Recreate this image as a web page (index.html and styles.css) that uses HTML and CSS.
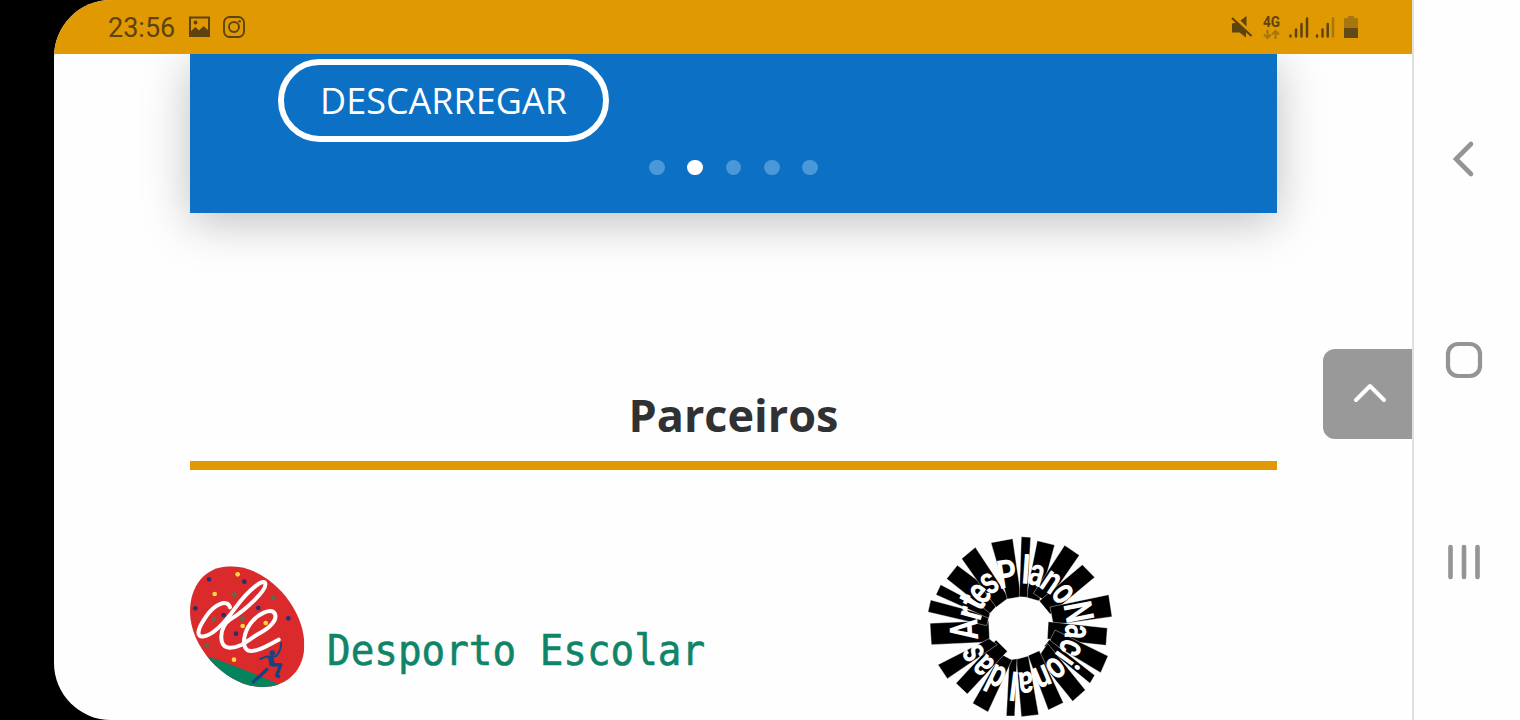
FILE: index.html
```html
<!DOCTYPE html>
<html lang="pt">
<head>
<meta charset="utf-8">
<title>Parceiros</title>
<link rel="stylesheet" href="styles.css">
</head>
<body>
<div class="device">
  <main class="screen">
    <header class="status">
      <div class="status-left">
        <span class="clock">23:56</span>
        <svg class="st-icon" width="22" height="22" viewBox="0 0 22 22"><path fill="#5d4310" fill-rule="evenodd" d="M0 .5H21V21H0ZM2 2.500V15L6.500 11L10 14.500L14.500 10L19 14V2.500ZM6.500 4.500a2 2 0 1 1 0 4a2 2 0 1 1 0-4"/></svg>
        <svg class="st-icon insta" width="22" height="22" viewBox="0 0 22 22" fill="none" stroke="#5d4310" stroke-width="1.9"><rect x="1" y="1" width="20" height="20" rx="5.5"/><circle cx="11" cy="11" r="5"/><circle cx="16.6" cy="5.3" r="1.3" fill="#5d4310" stroke="none"/></svg>
      </div>
      <svg class="status-right" width="132" height="30" viewBox="0 0 132 30" fill="#5d4310">
        <path d="M4 10.500L9 9.500L18 18V24.500L11.500 19.500H4V11ZM12.500 7.500L18.500 3V13.500Z"/>
        <path d="M4 5L23.500 23" fill="none" stroke="#5d4310" stroke-width="2.200"/>
        <text x="35" y="13.500" class="net" textLength="17" lengthAdjust="spacingAndGlyphs">4G</text>
        <g fill="none" stroke="#a8760f" stroke-width="2.200"><path d="M39.500 17V25M36 21.500L39.500 25L43 21.500M47.500 26V18M44 21.500L47.500 18L51 21.500"/></g>
        <g fill="none" stroke="#5d4310" stroke-width="2.500" stroke-linecap="round"><path d="M62.500 22.500V23.500M68 16.500V23.500M73.500 11V23.500M79 5.500V23.500M89 22.500V23.500M94.500 16.500V23.500M99.700 11V23.500"/><path stroke="#a8760f" d="M105 5.500V23.500"/></g>
        <path fill="#a8760f" d="M120 5V4Q120 3 121 3H125Q126 3 126 4V5H130V15H116V5Z"/>
        <path fill="#624918" d="M116 15H130V25H116Z"/>
      </svg>
    </header>
    <div class="content">
      <section class="banner">
        <a class="download"><svg width="264" height="56" viewBox="0 0 264 56"><text x="8" y="41" textLength="247" lengthAdjust="spacingAndGlyphs">DESCARREGAR</text></svg></a>
        <div class="dots"><i></i><i class="on"></i><i></i><i></i><i></i></div>
      </section>
      <h2 class="title">Parceiros</h2>
      <div class="partners">
        <div class="desporto">
          <svg width="115" height="123" viewBox="30 45 345 369">
            <defs><clipPath id="egg"><path id="shell" d="M30 185C30 110 73 49 153 49C264 49 373 172 373 285C373 356 326 411 247 411C141 411 30 294 30 185Z"/></clipPath></defs>
            <g clip-path="url(#egg)">
              <path fill="#da2a2b" d="M20 40H380V420H20Z"/>
              <path fill="#04835f" d="M60 312Q180 350 310 409L200 440L40 390Z"/>
              <g fill="#273070"><circle cx="87" cy="88" r="7"/><circle cx="193" cy="95" r="7"/><circle cx="46" cy="175" r="7"/><circle cx="131" cy="195" r="7"/><circle cx="235" cy="174" r="7"/><circle cx="325" cy="205" r="7"/><circle cx="168" cy="251" r="7"/></g>
              <g fill="#547050"><circle cx="163" cy="134" r="7"/><circle cx="279" cy="144" r="7"/><circle cx="102" cy="207" r="7"/><circle cx="187" cy="206" r="7"/><circle cx="80" cy="287" r="7"/></g>
              <g fill="#ffd83a"><circle cx="173" cy="73" r="7"/><circle cx="104" cy="132" r="7"/><circle cx="188" cy="228" r="7"/><circle cx="257" cy="219" r="7"/><circle cx="162" cy="329" r="7"/></g>
            </g>
            <g fill="none" stroke="#fff" stroke-width="12" stroke-linecap="round"><path d="M150 172C143 147 105 160 78 200C50 240 48 263 72 259C102 253 140 210 167 172C206 120 252 82 256 101C260 121 199 179 150 209C118 230 113 293 148 293C180 296 205 268 240 249C270 233 292 210 285 192C275 172 235 190 212 220C190 250 185 290 203 301C225 310 265 285 296 269"/></g>
            <g fill="none" stroke="#134580" stroke-width="10" stroke-linejoin="round"><path stroke-width="6" d="M238 328L258 320L287 319Q305 301 303 277"/><path stroke-width="16" d="M272 320L277 347"/><path d="M276 345L302 344L290 377L300 381"/><path d="M264 355L243 375L217 398"/></g><circle cx="277" cy="309" r="8" fill="#134580"/>
          </svg>
          <svg class="desporto-name" width="400" height="70" viewBox="0 0 400 70"><text x="10" y="50" textLength="378" lengthAdjust="spacingAndGlyphs">Desporto Escolar</text></svg>
        </div>
        <svg class="artes" width="200" height="190" viewBox="0 0 600 570">
          <g stroke="#fff" stroke-width="1.200">
            <path d="M34 344L30 280L206 272L209 336Z"/>
            <path d="M24 246L32 210L208 257L200 287Z"/>
            <path d="M48 194L62 164L212 243L206 265Z"/>
            <path d="M80 146L112 106L248 208L210 250Z"/>
            <path d="M125 86L166 52L266 203L228 232Z"/>
            <path d="M213 38L278 26L303 200L262 207Z"/>
            <path d="M352 32L404 45L358 213L318 202Z"/>
            <path d="M304 20L332 22L322 202L298 200Z"/>
            <path d="M434 46L478 76L381 217L340 190Z"/>
            <path d="M487 104L524 142L391 253L358 213Z"/>
            <path d="M566 194L576 260L400 285L390 231Z"/>
            <path d="M562 294L558 346L382 327L385 275Z"/>
            <path d="M564 378L542 428L388 335L405 300Z"/>
            <path d="M524 436L510 460L373 348L388 329Z"/>
            <path d="M496 480L458 514L353 384L383 340Z"/>
            <path d="M430 518L385 540L324 377L358 362Z"/>
            <path d="M356 554L304 560L289 388L325 378Z"/>
            <path d="M284 558L259 558L268 390L291 386Z"/>
            <path d="M204 546L158 520L242 372L276 390Z"/>
            <path d="M142 492L108 460L228 330L262 364Z"/>
            <path d="M82 446L54 404L207 326L232 344Z"/>
          </g>
          <g class="ring" transform="translate(303 290)">
            <text transform="rotate(-9) translate(-17 -122) scale(.78 1)">P</text>
            <text transform="rotate(4) translate(3 -130) scale(.78 1)">l</text>
            <text transform="rotate(17) translate(-1 -130) scale(.72 1)">a</text>
            <text transform="rotate(34) translate(0 -128) scale(.72 1)">n</text>
            <text transform="rotate(52) translate(0 -128) scale(.72 1)">o</text>
            <text transform="rotate(79) translate(-10 -137) scale(.74 1)">N</text>
            <text transform="rotate(95) translate(0 -133) scale(.7 1)">a</text>
            <text transform="rotate(113) translate(0 -130) scale(.72 1)">c</text>
            <text transform="rotate(126) translate(0 -130) scale(.72 1)">i</text>
            <text transform="rotate(140) translate(0 -130) scale(.72 1)">o</text>
            <text transform="rotate(157) translate(0 -130) scale(.72 1)">n</text>
            <text transform="rotate(175) translate(0 -136) scale(.72 1)">a</text>
            <text transform="rotate(187) translate(0 -136) scale(.78 1)">l</text>
            <text transform="rotate(206) translate(0 -133) scale(.72 1)">d</text>
            <text transform="rotate(224) translate(0 -130) scale(.7 1)">a</text>
            <text transform="rotate(241) translate(0 -132) scale(.72 1)">s</text>
            <text transform="rotate(267) translate(0 -130) scale(.76 1)">A</text>
            <text transform="rotate(285) translate(0 -122) scale(.78 1)">r</text>
            <text transform="rotate(297) translate(0 -126) scale(.78 1)">t</text>
            <text transform="rotate(309) translate(0 -126) scale(.72 1)">e</text>
            <text transform="rotate(324) translate(0 -130) scale(.72 1)">s</text>
          </g>
        </svg>
      </div>
    </div>
    <button class="to-top"><svg width="34" height="20" viewBox="0 0 34 20"><path d="M3 17L17 3L31 17" fill="none" stroke="#fff" stroke-width="4" stroke-linecap="round" stroke-linejoin="round"/></svg></button>
  </main>
  <nav class="nav" aria-label="Android">
    <svg width="40" height="40" viewBox="0 0 40 40"><path d="M27 5L12 20L27 35" fill="none" stroke="#949494" stroke-width="4.600" stroke-linecap="round"/></svg>
    <svg width="40" height="40" viewBox="0 0 40 40"><rect x="4" y="4" width="32" height="32" rx="10" fill="none" stroke="#949494" stroke-width="4.200"/></svg>
    <svg width="40" height="40" viewBox="0 0 40 40"><path d="M6.500 5V35M20 5V35M33.500 5V35" fill="none" stroke="#949494" stroke-width="4.600" stroke-linecap="round"/></svg>
  </nav>
</div>
</body>
</html>
```
FILE: styles.css
```css
* { box-sizing: border-box; }
body { margin: 0; font-family: "Open Sans", "Noto Sans", sans-serif; }
svg { display: block; flex: none; }
.device { display: flex; width: 1520px; height: 720px; padding-left: 54px; background: #000; overflow: hidden; }
.screen { position: relative; width: 1358px; height: 720px; background: #fefefe; border-radius: 57px 0 0 57px; overflow: hidden; }
.status { position: relative; z-index: 1; display: flex; justify-content: space-between; height: 54px; padding: 0 52px 0 54px; background: #e09900; }
.status-left { display: flex; align-items: center; height: 54px; }
.clock { width: 81px; padding-top: 2px; font: 27px/54px Roboto, sans-serif; color: #5d4310; }
.insta { margin-left: 12px; }
.status-right { margin-top: 13px; }
.net { font: bold 14px Roboto, sans-serif; }
.content { width: 1087px; margin-left: 136px; }
.banner { display: flex; flex-direction: column; height: 159px; padding-top: 5px; background: #0c70c4; box-shadow: 0 9px 44px rgba(0, 0, 0, .25); }
.download { display: flex; align-items: center; justify-content: center; width: 331px; height: 83px; margin-left: 88px; border: 6px solid #fff; border-radius: 42px; }
.download text { font-size: 36px; fill: #fff; }
.dots { display: flex; justify-content: center; gap: 22.800px; margin-top: 17.500px; }
.dots i { width: 15.500px; height: 15.500px; border-radius: 50%; background: #4b98d8; }
.dots .on { background: #fff; }
.title { height: 257px; margin: 0; padding-top: 170px; border-bottom: 9px solid #e09900; font-size: 45px; line-height: 64px; font-weight: 700; text-align: center; color: #303133; }
.partners { display: flex; justify-content: space-between; padding: 60px 157px 0 0; }
.desporto { display: flex; align-items: flex-start; padding-top: 35px; }
.desporto-name { margin: 50px 0 0 12px; }
.desporto-name text { font: 42px "DejaVu Sans Mono", monospace; fill: #108469; stroke: #108469; stroke-width: .6px; }
.ring text { font: bold 118px Roboto, sans-serif; fill: #fff; text-anchor: middle; }
.to-top { position: absolute; right: 0; top: 349px; display: flex; align-items: center; justify-content: center; width: 89px; height: 90px; padding: 0 0 2px 5px; border: 0; border-radius: 12px 0 0 12px; background: #999; }
.nav { display: flex; flex-direction: column; align-items: center; gap: 161.500px; width: 108px; height: 720px; padding: 138.500px 6px 0 0; background: #fefefe; border-left: 2px solid #e0e0e0; }
```
